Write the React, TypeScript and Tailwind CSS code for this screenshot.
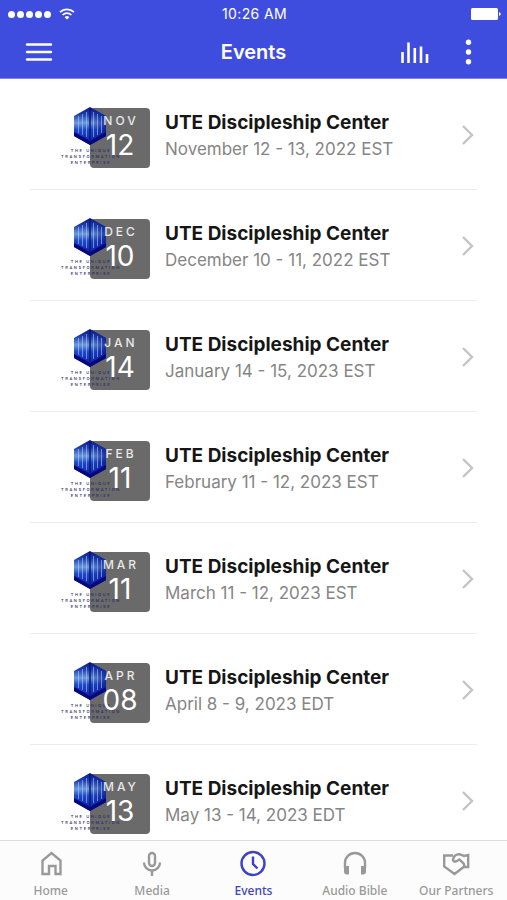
import type { ReactNode } from 'react';

interface EventItem {
  month: string;
  day: string;
  title: string;
  date: string;
}

const events: EventItem[] = [
  { month: 'NOV', day: '12', title: 'UTE Discipleship Center', date: 'November 12 - 13, 2022 EST' },
  { month: 'DEC', day: '10', title: 'UTE Discipleship Center', date: 'December 10 - 11, 2022 EST' },
  { month: 'JAN', day: '14', title: 'UTE Discipleship Center', date: 'January 14 - 15, 2023 EST' },
  { month: 'FEB', day: '11', title: 'UTE Discipleship Center', date: 'February 11 - 12, 2023 EST' },
  { month: 'MAR', day: '11', title: 'UTE Discipleship Center', date: 'March 11 - 12, 2023 EST' },
  { month: 'APR', day: '08', title: 'UTE Discipleship Center', date: 'April 8 - 9, 2023 EDT' },
  { month: 'MAY', day: '13', title: 'UTE Discipleship Center', date: 'May 13 - 14, 2023 EDT' },
];

function StatusBar() {
  return (
    <div className="grid h-7 grid-cols-3 items-center pl-2 pr-1.5">
      <div className="flex items-center gap-2">
        <div className="flex gap-0.5">
          {[0, 1, 2, 3, 4].map((i) => (
            <span key={i} className="size-[7px] rounded-full bg-white" />
          ))}
        </div>
        <svg width="16" height="12" viewBox="0 0 16 12" fill="none" stroke="white" strokeWidth="1.7">
          <path d="M1 4.2a10 10 0 0 1 14 0" />
          <path d="M3.6 7a6.2 6.2 0 0 1 8.8 0" />
          <path d="M8 11.6 5.6 9.2a3.4 3.4 0 0 1 4.8 0Z" fill="white" stroke="none" />
        </svg>
      </div>
      <span className="text-center text-sm tracking-wide">10:26 AM</span>
      <svg className="justify-self-end" width="30" height="12" viewBox="0 0 30 12" fill="white">
        <rect width="27" height="12" rx="1.5" />
        <path d="M28 4.2c2.4.6 2.4 3 0 3.6Z" />
      </svg>
    </div>
  );
}

function Header() {
  return (
    <header className="h-[79px] shrink-0 border-b border-[#7d86ec] bg-[#3f4ddf] text-white">
      <StatusBar />
      <div className="grid h-12 grid-cols-3 items-center px-6">
        <button aria-label="Menu" className="w-fit">
          <svg width="30" height="24" viewBox="0 0 30 24" stroke="white" strokeWidth="2.4" strokeLinecap="round">
            <path d="M3 4.5h24M3 12h24M3 19.5h24" />
          </svg>
        </button>
        <h1 className="text-center text-xl font-semibold">Events</h1>
        <div className="flex items-center justify-end gap-6">
          <button aria-label="Now playing">
            <svg width="30" height="24" viewBox="0 0 30 24" stroke="white" strokeWidth="2.6">
              <path d="M3.5 23V12M9.5 23V2.5M15.8 23V8M22 23V6.5M28 23V14" />
            </svg>
          </button>
          <button aria-label="More">
            <svg width="30" height="26" viewBox="0 0 30 26" fill="white">
              <circle cx="15.5" cy="3.2" r="2.7" />
              <circle cx="15.5" cy="13" r="2.7" />
              <circle cx="15.5" cy="22.8" r="2.7" />
            </svg>
          </button>
        </div>
      </div>
    </header>
  );
}

function EnterpriseLogo() {
  return (
    <svg className="absolute left-0 top-0 overflow-visible" width="60" height="60" viewBox="0 0 60 60">
      <defs>
        <linearGradient id="hex" x1="0" y1="0" x2="0" y2="1">
          <stop offset="0" stopColor="#0a1684" />
          <stop offset="0.2" stopColor="#1d3fb0" />
          <stop offset="0.42" stopColor="#6f9cdc" />
          <stop offset="0.6" stopColor="#1c48c8" />
          <stop offset="1" stopColor="#0c18a0" />
        </linearGradient>
        <linearGradient id="shade" x1="0" y1="0" x2="1" y2="0">
          <stop offset="0.5" stopColor="#0a1a90" stopOpacity="0" />
          <stop offset="1" stopColor="#0a1a90" stopOpacity="0.8" />
        </linearGradient>
      </defs>
      <path d="M30-1 46 8v20L30 37 14 28V8Z" fill="url(#hex)" />
      <path d="M30-1 46 8v20L30 37 14 28V8Z" fill="url(#shade)" />
      <path d="M30 37 14 28V24l16 9 16-9v4Z" fill="#07077c" />
      <path d="M18.5 8v17M22.5 6v21M26.5 4v25M33.5 4v25M37.5 6v21M41.5 8v17" stroke="#b9d4f7" strokeWidth="0.9" opacity="0.6" />
      <path d="M30 0v32" stroke="#0b1470" strokeWidth="1.4" />
      <g fill="#2b2b68" fontSize="4" fontWeight="500" textAnchor="middle" letterSpacing="1.6">
        <text x="31" y="44">THE UNIQUE</text>
        <text x="31" y="50">TRANSFORMATION</text>
        <text x="31" y="56">ENTERPRISE</text>
      </g>
    </svg>
  );
}

function EventRow({ event }: { event: EventItem }) {
  return (
    <li className="mx-[30px] border-b border-[#ececec]">
      <a href="#" className="flex h-[110px] items-center pl-[30px] pt-0.5">
        <div className="relative mt-1.5 flex h-[60px] w-[90px] shrink-0 justify-end">
          <div className="w-[60px] rounded bg-[#6a6a6a]">
            <EnterpriseLogo />
            <div className="relative flex flex-col items-center pt-1 text-white">
              <span className="pl-0.5 text-xs leading-[18px] font-medium tracking-[3px] text-white/85">{event.month}</span>
              <span className="text-[28px] leading-[30px]">{event.day}</span>
            </div>
          </div>
        </div>
        <div className="ml-[15px] min-w-0 flex-1 pt-0.5">
          <h2 className="truncate text-[19px] leading-[26px] font-bold text-[#161616]">{event.title}</h2>
          <p className="truncate text-[17px] leading-[26px] text-[#858585]">{event.date}</p>
        </div>
        <svg width="16" height="22" viewBox="0 0 16 22" fill="none" stroke="#c4c4c4" strokeWidth="2.4">
          <path d="m2 2 9 9-9 9" />
        </svg>
      </a>
    </li>
  );
}

function Tab({ label, active, children }: { label: string; active?: boolean; children: ReactNode }) {
  return (
    <a
      href="#"
      aria-current={active ? 'page' : undefined}
      className={`flex w-1/5 flex-col items-center gap-1.5 pt-2 font-['Noto_Sans'] text-xs leading-4 font-medium whitespace-nowrap ${active ? 'text-[#3d43c4]' : 'text-[#999]'}`}
    >
      <svg className="shrink-0" width="28" height="28" viewBox="0 0 28 28" fill="none" stroke="currentColor" strokeWidth="2.4">
        {children}
      </svg>
      {label}
    </a>
  );
}

export default function App() {
  return (
    <div className="flex h-screen flex-col bg-white font-['Inter',sans-serif]">
      <Header />
      <main className="min-h-0 flex-1 overflow-y-auto [scrollbar-width:none]">
        <ul>
          {events.map((event) => (
            <EventRow key={event.month} event={event} />
          ))}
        </ul>
      </main>
      <nav className="flex h-[60px] shrink-0 border-t border-[#dcdcdc] bg-[#fcfcfc]">
        <Tab label="Home">
          <path d="M5.5 25V11.5l9-7.5 9 7.5V25h-5v-8H12v8Z" />
        </Tab>
        <Tab label="Media">
          <rect x="11" y="4" width="6" height="13" rx="3" />
          <path d="M6 13.5a8 8 0 0 0 16 0M14 21.5V27" />
        </Tab>
        <Tab label="Events" active>
          <circle cx="14" cy="14.5" r="11.5" />
          <path d="M14 7.5V15l4.5 4.5" />
        </Tab>
        <Tab label="Audio Bible">
          <path d="M4 19v-5a10 10 0 0 1 20 0v5" />
          <path d="M3 17h5v8.5H6a3 3 0 0 1-3-3ZM25 17h-5v8.5h2a3 3 0 0 0 3-3Z" fill="currentColor" stroke="none" />
        </Tab>
        <Tab label="Our Partners">
          <path d="M11 6.5H2.2V17.5L12.5 25l8.5-6.5c1.6-1.3 1.5-3.2.2-4.3L17.5 10.5l-3 1.7c-2 1-4-.3-3.500-2l1.500-3c1.500-2 5-2.500 7.500-1l2 .8 4.200-1v12H21" />
        </Tab>
      </nav>
    </div>
  );
}
